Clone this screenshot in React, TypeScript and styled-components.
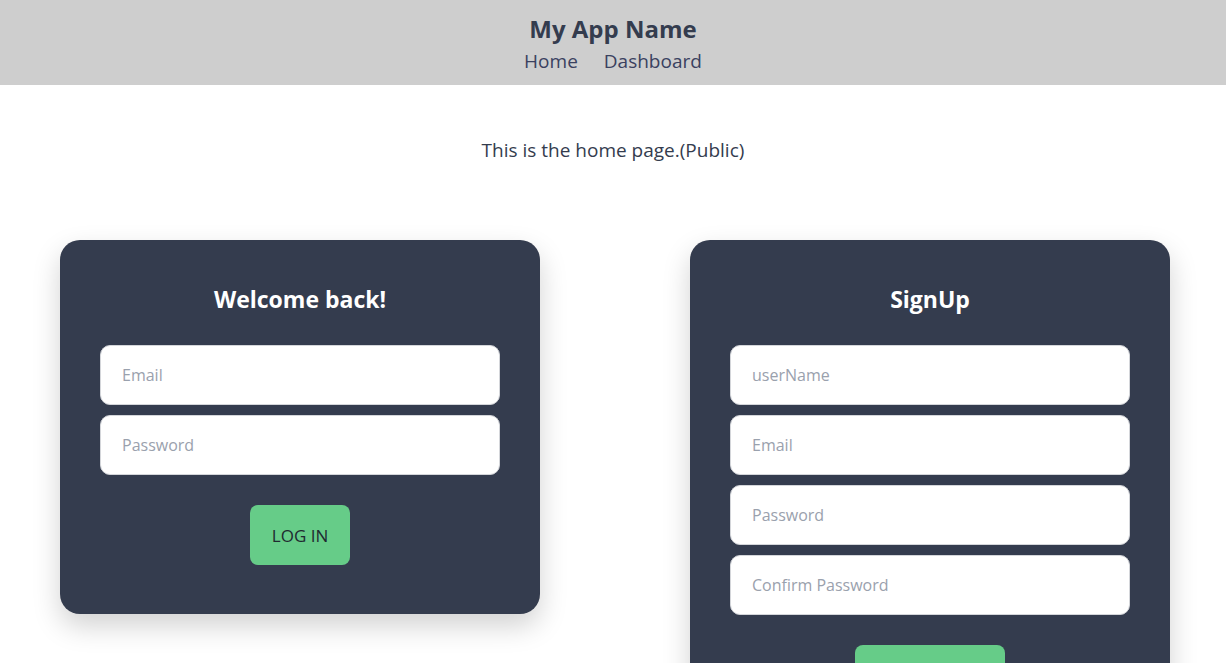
import React from "react";
import styled, {createGlobalStyle} from "styled-components";

const GlobalStyle = createGlobalStyle`
  html, body {
    margin: 0;
    padding: 0;
    background: #ffffff;
    font-family: "Open Sans", "Noto Sans", sans-serif;
    color: #343c4e;
  }
`;

const LoginCard = () => {
  return (
    <Card>
      <CardTitle>Welcome back!</CardTitle>
      <Fields>
        <Field placeholder="Email" />
        <Field type="password" placeholder="Password" />
      </Fields>
      <SubmitButton $width={100}>LOG IN</SubmitButton>
    </Card>
  );
};

const SignupCard = () => {
  return (
    <Card>
      <CardTitle>SignUp</CardTitle>
      <Fields>
        <Field placeholder="userName" />
        <Field placeholder="Email" />
        <Field type="password" placeholder="Password" />
        <Field type="password" placeholder="Confirm Password" />
      </Fields>
      <SubmitButton $width={150}>SIGN UP</SubmitButton>
    </Card>
  );
};

const App = () => {
  return (
    <>
      <GlobalStyle />
      <Header>
        <AppName>My App Name</AppName>
        <Nav>
          <NavLink>Home</NavLink>
          <NavLink>Dashboard</NavLink>
        </Nav>
      </Header>
      <Intro>This is the home page.(Public)</Intro>
      <Cards>
        <LoginCard />
        <SignupCard />
      </Cards>
    </>
  );
};

const Header = styled.header`
  height: 85px;
  background: #cecece;
  display: flex;
  flex-direction: column;
  align-items: center;
  padding-top: 12px;
  box-sizing: border-box;
`;

const AppName = styled.div`
  font-size: 24px;
  font-weight: 700;
  line-height: 34px;
  color: #343c4e;
`;

const Nav = styled.nav`
  display: flex;
  gap: 26px;
  margin-top: 2px;
`;

const NavLink = styled.a`
  font-size: 19px;
  line-height: 26px;
  color: #3a4160;
  cursor: pointer;
`;

const Intro = styled.p`
  margin: 52px 0 0;
  text-align: center;
  font-size: 19px;
  line-height: 26px;
  color: #343c4e;
`;

const Cards = styled.main`
  display: flex;
  align-items: flex-start;
  gap: 150px;
  padding: 77px 0 0 60px;
`;

const Card = styled.section`
  flex: 0 0 480px;
  box-sizing: border-box;
  padding: 40px 40px 49px;
  background: #343c4e;
  border-radius: 20px;
  box-shadow: 0 12px 28px rgba(0, 0, 0, 0.18);
  display: flex;
  flex-direction: column;
  align-items: center;
`;

const CardTitle = styled.h2`
  margin: 0 0 27px;
  font-size: 23px;
  font-weight: 700;
  line-height: 38px;
  color: #ffffff;
`;

const Fields = styled.div`
  width: 100%;
  display: flex;
  flex-direction: column;
  gap: 10px;
`;

const Field = styled.input`
  height: 60px;
  box-sizing: border-box;
  padding: 0 21px;
  border: 1px solid #d4d6da;
  border-radius: 10px;
  background: #ffffff;
  font-family: inherit;
  font-size: 16px;
  color: #343c4e;
  outline: none;

  &::placeholder {
    color: #9aa1ad;
  }
`;

const SubmitButton = styled.button<{$width: number}>`
  width: ${({$width}) => $width}px;
  height: 60px;
  margin-top: 30px;
  border: none;
  border-radius: 8px;
  background: #66cc88;
  font-family: inherit;
  font-size: 17px;
  color: #1f2a30;
  cursor: pointer;
`;

export default App;
